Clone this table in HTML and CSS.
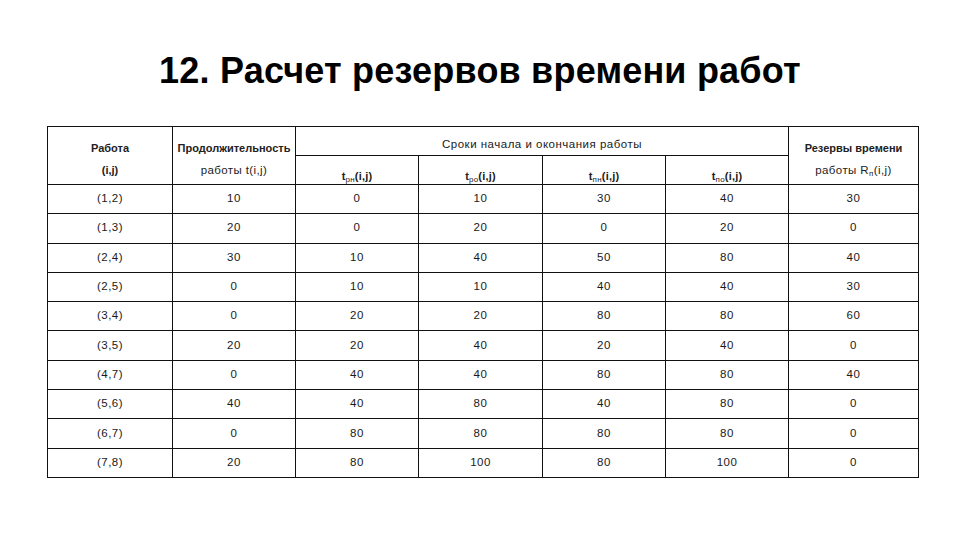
FILE: index.html
```html
<!DOCTYPE html>
<html lang="ru">
<head>
<meta charset="utf-8">
<link rel="stylesheet" href="styles.css">
</head>
<body>
<div class="slide">
  <h1 class="title">12. Расчет резервов времени работ</h1>
  <table class="grid">
    <colgroup>
      <col class="c1"><col class="c2"><col class="c3"><col class="c4"><col class="c5"><col class="c6"><col class="c7">
    </colgroup>
    <thead>
      <tr class="hrow">
        <th rowspan="2" class="hmain">Работа<br>(i,j)</th>
        <th rowspan="2" class="hmain">Продолжительность<br><span class="lite">работы t(i,j)</span></th>
        <th colspan="4" class="hspan">Сроки начала и окончания работы</th>
        <th rowspan="2" class="hmain">Резервы времени<br><span class="lite">работы R<sub>п</sub>(i,j)</span></th>
      </tr>
      <tr class="hrow">
        <th class="hsub">t<sub>рн</sub>(i,j)</th>
        <th class="hsub">t<sub>ро</sub>(i,j)</th>
        <th class="hsub">t<sub>пн</sub>(i,j)</th>
        <th class="hsub">t<sub>по</sub>(i,j)</th>
      </tr>
    </thead>
    <tbody>
      <tr><td>(1,2)</td><td>10</td><td>0</td><td>10</td><td>30</td><td>40</td><td>30</td></tr>
      <tr><td>(1,3)</td><td>20</td><td>0</td><td>20</td><td>0</td><td>20</td><td>0</td></tr>
      <tr><td>(2,4)</td><td>30</td><td>10</td><td>40</td><td>50</td><td>80</td><td>40</td></tr>
      <tr><td>(2,5)</td><td>0</td><td>10</td><td>10</td><td>40</td><td>40</td><td>30</td></tr>
      <tr><td>(3,4)</td><td>0</td><td>20</td><td>20</td><td>80</td><td>80</td><td>60</td></tr>
      <tr><td>(3,5)</td><td>20</td><td>20</td><td>40</td><td>20</td><td>40</td><td>0</td></tr>
      <tr><td>(4,7)</td><td>0</td><td>40</td><td>40</td><td>80</td><td>80</td><td>40</td></tr>
      <tr><td>(5,6)</td><td>40</td><td>40</td><td>80</td><td>40</td><td>80</td><td>0</td></tr>
      <tr><td>(6,7)</td><td>0</td><td>80</td><td>80</td><td>80</td><td>80</td><td>0</td></tr>
      <tr><td>(7,8)</td><td>20</td><td>80</td><td>100</td><td>80</td><td>100</td><td>0</td></tr>
    </tbody>
  </table>
</div>
</body>
</html>
```
FILE: styles.css
```css
html, body {
  margin: 0;
  padding: 0;
  background: #ffffff;
}
.slide {
  width: 960px;
  height: 540px;
  overflow: hidden;
  font-family: "Liberation Sans", Arial, sans-serif;
  color: #1a1a1a;
  padding-top: 50px;
  box-sizing: border-box;
}
.title {
  margin: 0;
  text-align: center;
  font-size: 36px;
  line-height: 42px;
  font-weight: bold;
  color: #000;
  letter-spacing: 0.2px;
}
.grid {
  margin: 34px 0 0 47px;
  width: 871px;
  border-collapse: collapse;
  table-layout: fixed;
  font-size: 11.5px;
  letter-spacing: 0.5px;
}
.c1 { width: 125px; }
.c2 { width: 123px; }
.c3 { width: 123px; }
.c4 { width: 124px; }
.c5 { width: 123px; }
.c6 { width: 123px; }
.c7 { width: 130px; }
.grid th, .grid td {
  border: 1px solid #111;
  padding: 0;
  text-align: center;
  font-weight: normal;
}
.grid .hrow { height: 29px; }
.grid .hmain {
  vertical-align: top;
  padding-top: 10px;
  line-height: 22px;
  font-size: 11px;
  letter-spacing: 0;
  font-weight: bold;
  color: #222;
}
.grid .hmain .lite {
  font-weight: normal;
  letter-spacing: 0.4px;
  font-size: 11.5px;
}
.grid .hspan {
  vertical-align: bottom;
  padding-bottom: 4px;
  line-height: 14px;
}
.grid .hsub {
  vertical-align: bottom;
  padding-bottom: 1px;
  line-height: 14px;
  font-size: 11px;
  letter-spacing: 0.2px;
  font-weight: bold;
  color: #222;
}
.grid sub {
  font-size: 8px;
  line-height: 0;
  vertical-align: -2px;
  font-weight: normal;
}
.grid tbody tr { height: 29.3px; }
.grid td {
  vertical-align: middle;
  line-height: 14px;
  padding-bottom: 2px;
}
```
